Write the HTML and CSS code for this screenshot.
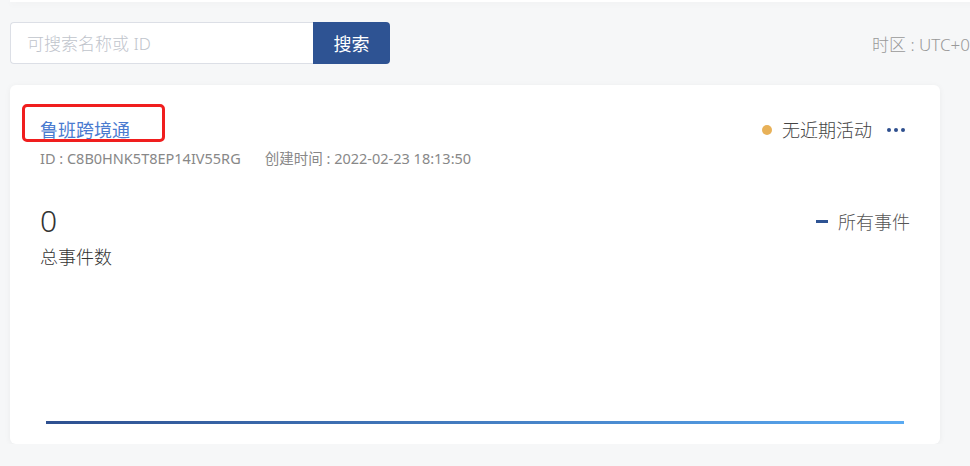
FILE: index.html
```html
<!DOCTYPE html>
<html>
<head>
    <title>事件概览</title>
    <link rel="stylesheet" href="styles.css">
</head>
<body>
    <div class="page">
        <div class="top-bar"></div>
        <div class="toolbar">
            <div class="search">
                <input type="text" class="search-input" placeholder="可搜索名称或 ID">
                <button class="search-btn">搜索</button>
            </div>
            <div class="timezone">时区 : UTC+0</div>
        </div>
        <div class="card">
            <div class="mark"></div>
            <div class="card-head">
                <div>
                    <a class="app-name" href="#">鲁班跨境通</a>
                    <div class="meta">
                        <span>ID : C8B0HNK5T8EP14IV55RG</span>
                        <span>创建时间 : 2022-02-23 18:13:50</span>
                    </div>
                </div>
                <div class="status">
                    <span class="dot"></span>
                    <span>无近期活动</span>
                    <span class="more"><i></i><i></i><i></i></span>
                </div>
            </div>
            <div class="stats">
                <div>
                    <div class="count">0</div>
                    <div class="count-label">总事件数</div>
                </div>
                <div class="legend">
                    <span class="legend-mark"></span>
                    <span>所有事件</span>
                </div>
            </div>
            <div class="chart">
                <div class="chart-line"></div>
            </div>
        </div>
    </div>
</body>
</html>
```

FILE: styles.css
```css
body {
    margin: 0;
    background-color: #f6f7f8;
    font-family: "Noto Sans", "Noto Sans CJK SC", sans-serif;
    overflow: hidden;
}
.page {
    width: 960px;
    padding-left: 10px;
}
.top-bar {
    height: 2px;
    margin-right: -10px;
    background-color: white;
    box-shadow: 0 2px 6px rgba(0, 0, 0, 0.05);
}
.toolbar {
    display: flex;
    justify-content: space-between;
    align-items: center;
    margin-top: 20px;
}
.search {
    display: flex;
}
.search-input {
    width: 303px;
    height: 42px;
    box-sizing: border-box;
    padding: 0 16px;
    border: 1px solid #dcdfe6;
    border-right: none;
    border-radius: 4px 0 0 4px;
    font-family: inherit;
    font-size: 17px;
    font-weight: 300;
    color: #333;
    outline: none;
}
.search-input::placeholder {
    color: #c0c4cc;
}
.search-btn {
    width: 77px;
    height: 42px;
    border: none;
    border-radius: 0 4px 4px 0;
    background-color: #2e5393;
    color: white;
    font-family: inherit;
    font-size: 18px;
    cursor: pointer;
}
.timezone {
    font-size: 17px;
    font-weight: 300;
    color: #999;
    white-space: nowrap;
}
.card {
    position: relative;
    width: 930px;
    height: 359px;
    box-sizing: border-box;
    margin-top: 21px;
    padding: 33px 30px 0 30px;
    background-color: white;
    border-radius: 6px;
    box-shadow: 0 1px 6px rgba(0, 0, 0, 0.05);
    display: flex;
    flex-direction: column;
}
.mark {
    position: absolute;
    left: 12px;
    top: 19px;
    width: 143px;
    height: 38px;
    box-sizing: border-box;
    border: 3px solid #f01e1e;
    border-radius: 5px;
}
.card-head {
    display: flex;
    justify-content: space-between;
    align-items: flex-start;
}
.app-name {
    display: block;
    font-size: 18px;
    line-height: 24px;
    color: #4a7bd0;
    text-decoration: none;
}
.meta {
    margin-top: 6px;
    font-size: 14.5px;
    line-height: 20px;
    color: #888;
    display: flex;
    gap: 24px;
}
.status {
    display: flex;
    align-items: center;
    font-size: 18px;
    font-weight: 300;
    line-height: 24px;
    color: #444;
    margin-right: 5px;
}
.dot {
    width: 10px;
    height: 10px;
    border-radius: 50%;
    background-color: #e8b158;
    margin-right: 10px;
}
.more {
    display: flex;
    gap: 3px;
    margin-left: 15px;
}
.more i {
    width: 4px;
    height: 4px;
    border-radius: 50%;
    background-color: #2e4f8e;
}
.stats {
    display: flex;
    justify-content: space-between;
    margin-top: 35px;
}
.count {
    font-size: 30px;
    font-weight: 300;
    line-height: 36px;
    color: #333;
}
.count-label {
    margin-top: 6px;
    font-size: 18px;
    font-weight: 300;
    line-height: 24px;
    color: #333;
}
.legend {
    display: flex;
    align-items: center;
    height: 36px;
    font-size: 18px;
    font-weight: 300;
    color: #555;
}
.legend-mark {
    width: 12px;
    height: 3px;
    background-color: #2e5393;
    margin-right: 10px;
}
.chart {
    margin: auto 0 20px 0;
    padding: 0 6px;
}
.chart-line {
    height: 3px;
    background: linear-gradient(to right, #2e5090, #5aaaf2);
}
```
